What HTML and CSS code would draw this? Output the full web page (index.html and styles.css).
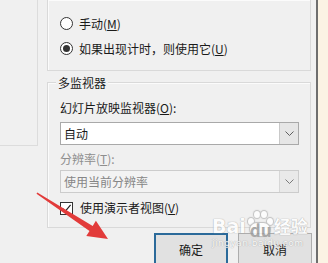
FILE: index.html
```html
<!DOCTYPE html>
<html lang="zh-CN">

<head>
    <meta charset="UTF-8">
    <title>选项</title>

    <link rel="stylesheet" href="styles.css">
</head>

<body>
    <div class="dialog">
        <div class="side"></div>

        <div class="main">
            <div class="group group-top">
                <div class="option">
                    <span class="radio"></span>
                    <span>手动(<u>M</u>)</span>
                </div>
                <div class="option">
                    <span class="radio checked"></span>
                    <span>如果出现计时，则使用它(<u>U</u>)</span>
                </div>
            </div>

            <div class="group group-monitor">
                <div class="group-title">多监视器</div>

                <div class="field-label">幻灯片放映监视器(<u>O</u>):</div>
                <div class="combo">
                    <span class="combo-value">自动</span>
                    <span class="combo-arrow">
                        <svg width="9" height="5" viewBox="0 0 9 5"><path d="M0.5 0.5 L4.5 4.5 L8.5 0.5" fill="none" stroke="#5f5f5f" stroke-width="1"/></svg>
                    </span>
                </div>

                <div class="field-label disabled">分辨率(<u>T</u>):</div>
                <div class="combo disabled">
                    <span class="combo-value">使用当前分辨率</span>
                    <span class="combo-arrow">
                        <svg width="9" height="5" viewBox="0 0 9 5"><path d="M0.5 0.5 L4.5 4.5 L8.5 0.5" fill="none" stroke="#7a7a7a" stroke-width="1"/></svg>
                    </span>
                </div>

                <div class="option check-row">
                    <span class="checkbox">
                        <svg width="11" height="11" viewBox="0 0 11 11"><path d="M1.5 5.5 L4.2 8.3 L9.6 1.8" fill="none" stroke="#222" stroke-width="1.2"/></svg>
                    </span>
                    <span>使用演示者视图(<u>V</u>)</span>
                </div>
            </div>

            <div class="buttons">
                <button class="btn default">确定</button>
                <button class="btn">取消</button>
            </div>
        </div>
    </div>

    <!-- watermark over the buttons -->
    <div class="watermark">
        <div class="wm-logo">
            <span>Bai</span>
            <span class="paw">
                <span class="toe t1"></span><span class="toe t2"></span><span class="toe t3"></span><span class="toe t4"></span>
                <span class="pad">du</span>
            </span>
            <span>经验</span>
        </div>
        <div class="wm-url">jingyan.baidu.com</div>
    </div>

    <svg class="arrow" width="328" height="263" viewBox="0 0 328 263">
        <polygon points="36.5,193.8 37.3,192.4 92.7,225.9 95.9,220.8 108,239 86.3,236 89.5,230.9" fill="#e23b3a"/>
    </svg>
</body>

</html>
```

FILE: styles.css
```css
body {
    margin: 0;
    width: 328px;
    height: 263px;
    overflow: hidden;
    background-color: #fbf3e4;
    font-family: "Noto Sans CJK SC", "Microsoft YaHei", sans-serif;
    font-size: 12px;
    color: #1a1a1a;
    position: relative;
}

.dialog {
    width: 316px;
    height: 263px;
    background-color: #f0f0f0;
    border-right: 2px solid #6e6e6e;
    display: flex;
    overflow: hidden;
}

.side {
    flex: none;
    width: 37px;
    height: 145px;
    border-right: 1px solid #dcdcdc;
    border-bottom: 1px solid #dcdcdc;
}

.main {
    flex: none;
    width: 264px;
    margin-left: 9px;
}

.group {
    border: 1px solid #d9d9d9;
    box-shadow: inset 1px 1px 0 #fbfbfb;
    box-sizing: border-box;
}

.group-top {
    height: 71px;
    border-top: none;
    padding: 11px 0 0 12px;
}

.option {
    display: flex;
    align-items: center;
    height: 25px;
    line-height: 16px;
}

.radio {
    width: 11px;
    height: 11px;
    border: 1px solid #333;
    border-radius: 50%;
    background: #fff;
    margin-right: 6px;
    position: relative;
}

.radio.checked::after {
    content: "";
    position: absolute;
    left: 2px;
    top: 2px;
    width: 7px;
    height: 7px;
    border-radius: 50%;
    background: #333;
}

.group-monitor {
    margin-top: 11px;
    padding: 0 11px 11px 12px;
}

.group-title {
    width: max-content;
    margin: -8px 0 0 -4px;
    padding: 0 2px;
    line-height: 16px;
    background-color: #f0f0f0;
}

.field-label {
    line-height: 16px;
    margin-top: 9px;
}

.field-label.disabled {
    margin-top: 6px;
    color: #8e8e8e;
}

.combo {
    display: flex;
    height: 23px;
    margin-top: 6px;
    border: 1px solid #a9a9a9;
    background: #fff;
    box-sizing: border-box;
}

.combo.disabled {
    margin-top: 3px;
    border-color: #cccccc;
    background: #f3f3f3;
    color: #868686;
}

.combo-value {
    flex: 1;
    line-height: 21px;
    padding-left: 3px;
}

.combo-arrow {
    width: 18px;
    border-left: 1px solid #c9c9c9;
    background: #e6e6e6;
    display: flex;
    align-items: center;
    justify-content: center;
}

.combo.disabled .combo-arrow {
    border-left-color: #d6d6d6;
    background: #e9e9e9;
}

.check-row {
    height: 16px;
    margin-top: 7px;
}

.checkbox {
    width: 11px;
    height: 11px;
    border: 1px solid #333;
    background: #fff;
    margin-right: 7px;
    display: flex;
    align-items: center;
    justify-content: center;
}

.buttons {
    display: flex;
    justify-content: flex-end;
    gap: 10px;
    margin-top: 5px;
    margin-right: -1px;
}

.btn {
    width: 74px;
    height: 32px;
    font-family: inherit;
    font-size: 12px;
    color: #1a1a1a;
    background: #e1e1e1;
    border: 1px solid #adadad;
    padding: 0;
}

.btn.default {
    border: 2px solid #2b6a9a;
}

.watermark {
    position: absolute;
    left: 212px;
    top: 211px;
    color: #fff;
    text-shadow: 0 0 1px #a5a5a5, 0 0 1px #a5a5a5;
    opacity: 0.8;
}

.wm-logo {
    display: flex;
    align-items: flex-end;
    font-family: "DejaVu Sans", sans-serif;
    font-size: 19px;
    font-weight: bold;
    line-height: 22px;
}

.wm-logo span:last-child {
    font-family: "Noto Sans CJK SC", sans-serif;
    font-size: 17px;
}

.paw {
    position: relative;
    width: 26px;
    height: 26px;
    margin: 0 1px;
}

.toe {
    position: absolute;
    width: 6px;
    height: 7px;
    border-radius: 50%;
    background: #fff;
    box-shadow: 0 0 1px 1px #b5b5b5;
}

.t1 { left: 1px; top: 7px; }
.t2 { left: 7px; top: 0; }
.t3 { left: 14px; top: 0; }
.t4 { left: 20px; top: 7px; }

.pad {
    position: absolute;
    left: 3px;
    top: 12px;
    width: 20px;
    height: 13px;
    border-radius: 8px;
    background: #fff;
    box-shadow: 0 0 1px 1px #b5b5b5;
    color: #9a9a9a;
    text-shadow: none;
    font-size: 11px;
    line-height: 13px;
    text-align: center;
}

.wm-url {
    font-family: "DejaVu Sans", sans-serif;
    font-size: 9px;
    line-height: 10px;
    letter-spacing: 0.5px;
    margin-top: 1px;
}

.arrow {
    position: absolute;
    left: 0;
    top: 0;
    pointer-events: none;
}
```
